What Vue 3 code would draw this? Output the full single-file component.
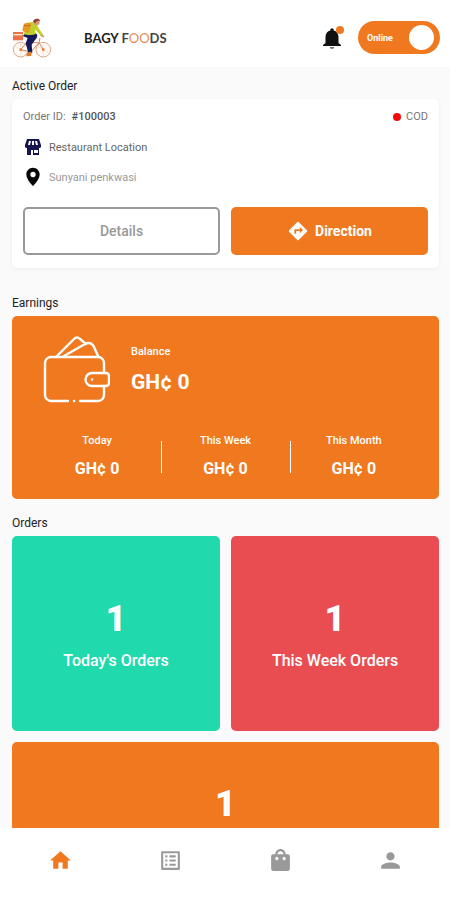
<script setup>
import { ref } from "vue"
const online = ref(true)
const active = ref("Home")
const order = { id: "#100003", payment: "COD", address: "Sunyani penkwasi" }
const earnings = [
  { label: "Today", value: "GH¢ 0" },
  { label: "This Week", value: "GH¢ 0" },
  { label: "This Month", value: "GH¢ 0" },
]
const orders = [
  { label: "Today's Orders", count: 1, color: "green" },
  { label: "This Week Orders", count: 1, color: "red" },
  { label: "", count: 1, color: "orange" },
]
const tabs = [
  { name: "Home", icon: "M10 20v-6h4v6h5v-8h3L12 3 2 12h3v8z" },
  {
    name: "Requests",
    icon: "M19 5v14H5V5h14m1.1-2H3.9c-.5 0-.9.4-.9.9v16.2c0 .4.4.9.9.9h16.2c.4 0 .9-.5.9-.9V3.9c0-.5-.5-.9-.9-.9zM11 7h6v2h-6V7zm0 4h6v2h-6v-2zm0 4h6v2h-6zM7 7h2v2H7zm0 4h2v2H7zm0 4h2v2H7z",
  },
  {
    name: "Orders",
    icon: "M19 6h-2c0-2.760-2.240-5-5-5S7 3.240 7 6H5c-1.100 0-2 .9-2 2v12c0 1.100.9 2 2 2h14c1.100 0 2-.9 2-2V8c0-1.100-.9-2-2-2zm-9 4c0 1-.6 1.700-1.500 1.700S7 11 7 10s.6-1.700 1.500-1.700S10 9 10 10zm2-7c1.660 0 3 1.340 3 3H9c0-1.660 1.340-3 3-3zm5 7c0 1-.6 1.700-1.500 1.700S14 11 14 10s.6-1.700 1.500-1.700S17 9 17 10z",
  },
  { name: "Profile", icon: "M12 12c2.210 0 4-1.790 4-4s-1.790-4-4-4-4 1.790-4 4 1.790 4 4 4zm0 2c-2.670 0-9 1.340-9 4v2h18v-2c0-2.660-6.330-4-9-4z" },
]
</script>

<template>
  <div class="app">
    <header class="header">
      <svg class="logo" viewBox="36 52 118 120" fill="none">
        <g stroke="#d9a982" stroke-width="3">
          <circle cx="61" cy="147" r="22" fill="#fffaf5" />
          <circle cx="129" cy="147" r="22" fill="#fffaf5" />
          <path d="M45 136l32 22M61 128v38M129 128v38M114 138l30 18" stroke="#f4d9bf" stroke-width="2" />
          <path d="M61 147l18-21h37l-24 28zM116 126l13 21M119 112l-3 14" stroke="#cf8a5c" />
        </g>
        <circle cx="61" cy="147" r="4" fill="#e9782a" />
        <circle cx="129" cy="147" r="4" fill="#e9782a" />
        <rect x="38" y="94" width="30" height="25" fill="#ee7048" />
        <path d="M39 102h28" stroke="#fff0df" stroke-width="4" />
        <path d="M75 98c8-5 27-4 34 2 4 5 1 13-5 18l-10 14 2 24-11 3-9-31 6-16-15-6z" fill="#151a58" />
        <path d="M86 66c10-5 22 1 27 13l16 25-6 4-19-23 2 15c-10 4-26 4-36 0z" fill="#c0cf29" />
        <path d="M70 71c6-6 18-6 22 0l-5 24c-9 2-20-1-21-7z" fill="#e59a22" />
        <path d="M71 74c7 3 14 2 20-1" stroke="#bd6920" stroke-width="3" />
        <path d="M122 103l9 6" stroke="#d99876" stroke-width="5" />
        <circle cx="109" cy="65" r="9" fill="#d99978" />
        <path d="M98 63c1-10 17-12 22-3l-10 1-5 7z" fill="#973e35" />
        <path d="M82 154l12-1-1 13-16 1z" fill="#d97d26" />
      </svg>
      <h1 class="brand">BAGY <span class="brand-light">F<span class="brand-orange">OO</span>DS</span></h1>
      <button class="bell" aria-label="Notifications">
        <svg viewBox="0 0 24 24" width="24" height="24">
          <path d="M12 23c1.300 0 2.300-.8 2.300-2H9.700c0 1.200 1 2 2.300 2z" fill="#777" />
          <path d="M18.500 17v-6c0-3.200-1.800-5.800-4.800-6.500V4c0-1-.7-1.800-1.700-1.800s-1.700.8-1.700 1.800v.5C7.300 5.200 5.500 7.800 5.500 11v6L3 19v1h18v-1z" fill="#111" />
        </svg>
        <span class="bell-dot"></span>
      </button>
      <label class="switch" :class="{ 'switch-off': !online }">
        <span>{{ online ? "Online" : "Offline" }}</span>
        <input v-model="online" class="switch-knob" type="checkbox" />
      </label>
    </header>

    <main class="content">
      <section>
        <h2 class="title">Active Order</h2>
        <article class="order">
          <div class="order-head">
            <span>Order ID:</span>
            <span class="order-id">{{ order.id }}</span>
            <span class="order-dot"></span>
            <span>{{ order.payment }}</span>
          </div>
          <div class="place">
            <svg viewBox="0 0 20 20" width="20" height="20">
              <path d="M4 2h12l2 6v2a2 2 0 0 1-2 1v7h-6v-5H8v5H4v-7a2 2 0 0 1-2-1V8z" fill="#17154f" />
              <path d="M6 4L5 8h2l1-4zM9 4v4h2V4zM12 4l1 4h2l-1-4zM11 13h4v3h-4z" fill="#fff" />
            </svg>
            <span>Restaurant Location</span>
          </div>
          <div class="place place-light">
            <svg viewBox="0 0 24 24" width="20" height="20">
              <path d="M12 1C7.600 1 4 4.500 4 9c0 6 8 14 8 14s8-8 8-14c0-4.500-3.600-8-8-8zm0 11.200a3.200 3.200 0 1 1 0-6.400 3.200 3.200 0 0 1 0 6.400z" fill="#050505" />
            </svg>
            <span>{{ order.address }}</span>
          </div>
          <div class="actions">
            <button class="btn btn-outline">Details</button>
            <button class="btn btn-fill">
              <svg viewBox="0 0 24 24" width="22" height="22">
                <path d="M21.710 11.290l-9-9a1 1 0 0 0-1.410 0l-9 9a1 1 0 0 0 0 1.410l9 9c.390.390 1.020.390 1.410 0l9-9a1 1 0 0 0 0-1.410zM14 14.500V12h-4v3H8v-4c0-.550.450-1 1-1h5V7.500l3.500 3.500-3.500 3.500z" fill="#fff" />
              </svg>
              Direction
            </button>
          </div>
        </article>
      </section>

      <section class="earnings-section">
        <h2 class="title">Earnings</h2>
        <article class="earnings">
          <div class="balance">
            <svg class="wallet" viewBox="0 0 67 67" fill="none" stroke="#fff" stroke-width="2.400" stroke-linecap="round" stroke-linejoin="round">
              <path d="M25 65H8a6 6 0 0 1-6-6V27a6 6 0 0 1 6-6h47a6 6 0 0 1 6 6v10M61 50v9a6 6 0 0 1-6 6H37M31 65h.1" />
              <path d="M49 37h14a3 3 0 0 1 3 3v7a3 3 0 0 1-3 3H49a6 6 0 0 1 0-13zM49 43.500h.1" />
              <path d="M14 20L31 3c2-2 4-2 6 0l6 5M21 20l21-12c4-2 7-1 9 3l4 9" />
            </svg>
            <div>
              <p class="label">Balance</p>
              <p class="balance-value">GH¢ 0</p>
            </div>
          </div>
          <div class="stats">
            <div v-for="item in earnings" :key="item.label" class="stat">
              <p class="label">{{ item.label }}</p>
              <p class="stat-value">{{ item.value }}</p>
            </div>
          </div>
        </article>
      </section>

      <section class="orders-section">
        <h2 class="title">Orders</h2>
        <div class="tiles">
          <article v-for="item in orders" :key="item.color" class="tile" :class="item.color">
            <p class="tile-count">{{ item.count }}</p>
            <p v-if="item.label" class="tile-label">{{ item.label }}</p>
          </article>
        </div>
      </section>
    </main>

    <nav class="tabs">
      <button v-for="tab in tabs" :key="tab.name" class="tab" :class="{ 'tab-active': active === tab.name }" :aria-label="tab.name" @click="active = tab.name">
        <svg viewBox="0 0 24 24" width="25" height="25"><path :d="tab.icon" fill="currentColor" fill-rule="evenodd" /></svg>
      </button>
    </nav>
  </div>
</template>

<style>
body {
  margin: 0;
}
</style>

<style scoped>
.app {
  display: flex;
  flex-direction: column;
  height: 100vh;
  font-family: Roboto, "Liberation Sans", sans-serif;
  color: #222;
  background-color: #fafafa;
}
.app * {
  box-sizing: border-box;
}
p,
h1,
h2 {
  margin: 0;
}
button {
  padding: 0;
  border: 0;
  background: none;
  font-family: inherit;
  cursor: pointer;
}
svg {
  display: block;
  flex: none;
}

.header {
  display: flex;
  flex: none;
  align-items: center;
  height: 67px;
  padding: 8px 10px 0 12px;
  background-color: #fff;
}
.logo {
  width: 40px;
  height: 40px;
}
.brand {
  flex: 1;
  margin-left: 32px;
  font-family: Lato, sans-serif;
  font-size: 13px;
  font-weight: 700;
  line-height: 16px;
}
.brand-light {
  color: #444;
}
.brand-orange {
  font-weight: 400;
  color: #e98a5c;
}
.bell {
  position: relative;
  margin-right: 14px;
}
.bell-dot {
  position: absolute;
  top: 0;
  right: 0;
  width: 8px;
  height: 8px;
  border-radius: 50%;
  background-color: #f07920;
}
.switch {
  display: flex;
  align-items: center;
  justify-content: space-between;
  width: 82px;
  height: 33px;
  padding: 0 6px 0 9px;
  border-radius: 17px;
  color: #fff;
  background-color: #f07920;
  font-size: 9px;
  font-weight: 700;
  cursor: pointer;
}
.switch-off {
  flex-direction: row-reverse;
  background-color: #999;
}
.switch-knob {
  width: 25px;
  height: 25px;
  margin: 0;
  border-radius: 50%;
  background-color: #fff;
  appearance: none;
}

.content {
  flex: 1;
  min-height: 0;
  padding: 11px 11px 0 12px;
  overflow: hidden;
}
.title {
  margin-bottom: 5px;
  font-size: 12px;
  font-weight: 400;
  line-height: 16px;
}
.order {
  padding: 10px 11px 13px;
  border-radius: 5px;
  background-color: #fff;
  box-shadow: 0 1px 4px rgba(0, 0, 0, 0.06);
}
.order-head {
  display: flex;
  align-items: center;
  margin-bottom: 12px;
  font-size: 11px;
  line-height: 16px;
  color: #777;
}
.order-id {
  flex: 1;
  margin-left: 6px;
  font-weight: 500;
  color: #555;
}
.order-dot {
  width: 8px;
  height: 8px;
  margin-right: 5px;
  border-radius: 50%;
  background-color: #f20d0d;
}
.place {
  display: flex;
  align-items: center;
  gap: 6px;
  height: 20px;
  margin-bottom: 10px;
  font-size: 11px;
  color: #666;
}
.place-light {
  margin-bottom: 20px;
  color: #999;
}
.actions {
  display: grid;
  grid-template-columns: 1fr 1fr;
  gap: 11px;
}
.btn {
  display: flex;
  align-items: center;
  justify-content: center;
  gap: 6px;
  height: 48px;
  border-radius: 5px;
  font-size: 14px;
}
.btn-outline {
  border: 2px solid #999;
  font-weight: 500;
  color: #999;
}
.btn-fill {
  font-weight: 700;
  color: #fff;
  background-color: #f07920;
}

.earnings-section {
  margin-top: 27px;
}
.earnings {
  padding: 20px 21px 18px;
  border-radius: 5px;
  color: #fff;
  background-color: #f07920;
}
.balance {
  display: flex;
  align-items: center;
  gap: 21px;
  margin-bottom: 30px;
  padding-left: 10px;
}
.wallet {
  width: 67px;
  height: 67px;
}
.label {
  font-size: 11px;
  font-weight: 500;
  line-height: 16px;
}
.balance-value {
  margin-top: 8px;
  font-size: 21px;
  font-weight: 700;
  line-height: 28px;
}
.stats {
  display: flex;
}
.stat {
  position: relative;
  flex: 1;
  text-align: center;
}
.stat + .stat::before {
  position: absolute;
  top: 8px;
  left: 0;
  width: 1px;
  height: 32px;
  background-color: #fff;
  content: "";
}
.stat-value {
  margin-top: 8px;
  font-size: 16px;
  font-weight: 700;
  line-height: 24px;
}

.orders-section {
  margin-top: 16px;
}
.tiles {
  display: grid;
  grid-template-columns: 1fr 1fr;
  gap: 11px;
}
.tile {
  display: flex;
  flex-direction: column;
  align-items: center;
  justify-content: center;
  gap: 9px;
  height: 195px;
  padding-top: 4px;
  border-radius: 5px;
  color: #fff;
}
.tile-count {
  font-size: 36px;
  font-weight: 900;
  line-height: 42px;
}
.tile-label {
  font-size: 16px;
  font-weight: 500;
  line-height: 24px;
}
.green {
  background-color: #20d9ac;
}
.red {
  background-color: #e94d51;
}
.orange {
  grid-column: span 2;
  height: 120px;
  background-color: #f07920;
}

.tabs {
  display: flex;
  flex: none;
  height: 72px;
  padding: 0 5px 8px 6px;
  background-color: #fff;
}
.tab {
  display: flex;
  flex: 1;
  align-items: center;
  justify-content: center;
  color: #999;
}
.tab-active {
  color: #f07920;
}
</style>
